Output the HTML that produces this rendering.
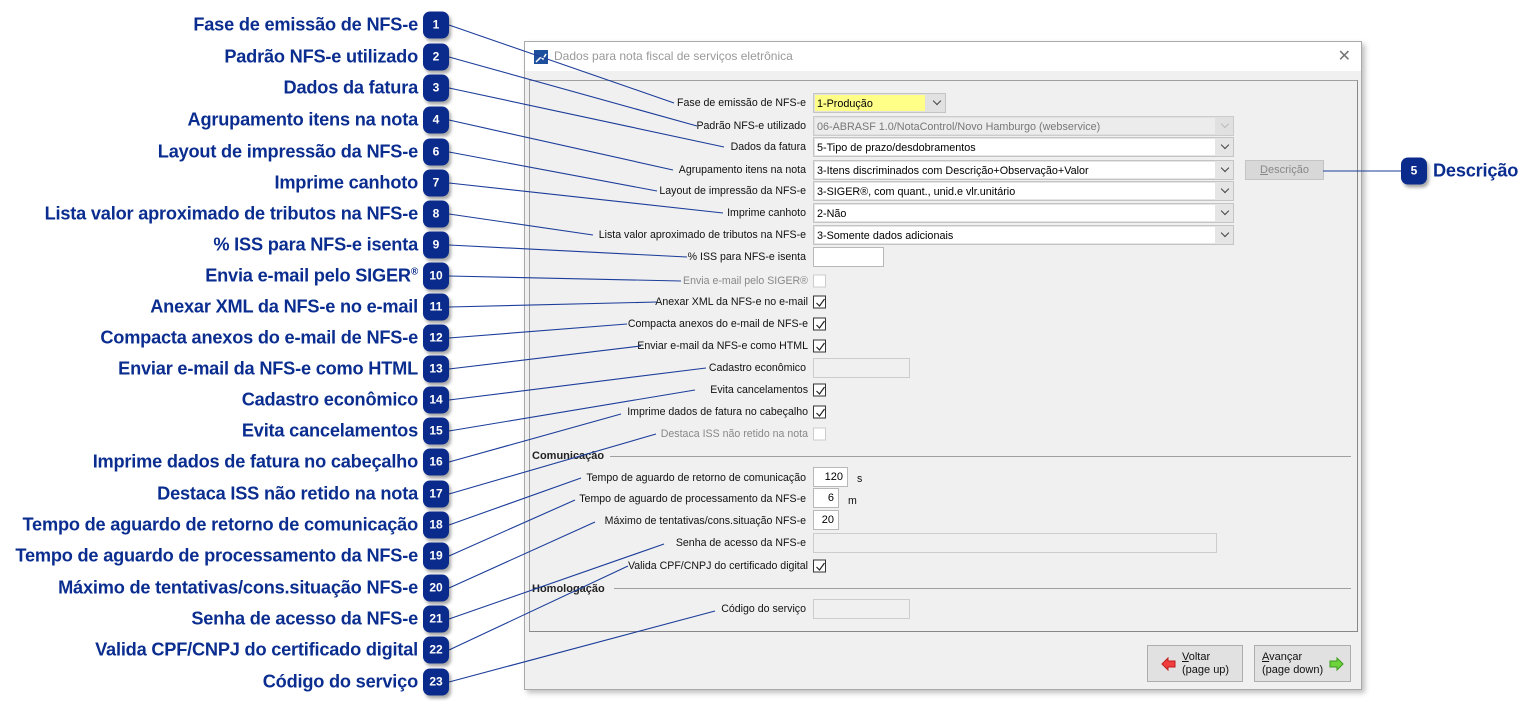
<!DOCTYPE html>
<html><head><meta charset="utf-8"><style>
*{margin:0;padding:0;box-sizing:border-box}
body{width:1532px;height:711px;background:#fff;position:relative;overflow:hidden;font-family:"Liberation Sans",sans-serif}
.cl{position:absolute;right:1114px;font-weight:bold;font-size:18.2px;color:#0a2d8f;white-space:nowrap;transform:translateY(-50%);letter-spacing:-0.2px}
.bd{position:absolute;width:26px;height:27px;border-radius:7px;background:#0b2b8c;color:#fff;font-weight:bold;font-size:12px;text-align:center;line-height:27px;box-shadow:2px 3px 3px rgba(0,0,0,.35);transform:translateY(-50%)}
#dlg{position:absolute;left:524px;top:41px;width:838px;height:649px;background:#f0f0f0;border:1px solid #a9a9a9;box-shadow:3px 3px 5px rgba(0,0,0,.25)}
#tb{position:absolute;left:0;top:0;width:100%;height:29px;background:#fff;font-size:12px;color:#999;line-height:29px;padding-left:29px}
#pn{position:absolute;left:4px;top:38px;width:829px;height:552px;border:1px solid #a0a0a0;border-right-color:#888;border-bottom-color:#888}
.l{position:absolute;right:1532px;font-size:10.6px;color:#111;white-space:nowrap;transform:translateY(-50%)}
.lg{color:#888}
.cb{position:absolute;height:20px;border:1px solid #c4c4c4;background:#e5e5e5;font-size:10.8px;line-height:18px;transform:translateY(-50%)}
.cb span{position:absolute;left:1px;top:1px;bottom:1px;right:18px;background:#fff;padding-left:2px;white-space:nowrap;overflow:hidden}
.cb i{position:absolute;right:5px;top:4px;width:6px;height:6px;border-right:1px solid #444;border-bottom:1px solid #444;transform:rotate(45deg)}
.tx{position:absolute;height:20px;border:1px solid #b8b8b8;background:#fff;font-size:11px;line-height:18px;transform:translateY(-50%);text-align:right;padding-right:4px}
.tx.d{background:#f0f0f0;border-color:#ccc}
.ck{position:absolute;left:813px;width:13px;height:13px;border:1px solid #333;background:#fff;transform:translateY(-50%)}
.ck.d{border-color:#ccc}
.ck svg{position:absolute;left:1px;top:1px}
.sec{position:absolute;left:532px;font-size:11px;font-weight:bold;color:#222;transform:translateY(-50%)}
.hr{position:absolute;left:610px;right:181px;height:1px;background:#a0a0a0}
.btn{position:absolute;top:645px;height:37px;border:1px solid #adadad;background:#e1e1e1;font-size:11px;line-height:13px;color:#111}
</style></head><body>

<div id="dlg">
<div id="tb"><svg style="position:absolute;left:9px;top:8px" width="14" height="14"><rect width="14" height="14" fill="#1d4f9c"/><path d="M2 12 L7 7 L9 9 L12 4" stroke="#fff" stroke-width="1.5" fill="none"/></svg>Dados para nota fiscal de serviços eletrônica<span style="position:absolute;right:10px;top:0;font-size:16px;color:#777">✕</span></div>
<div id="pn"></div>
</div>

<div style="position:absolute;left:0;top:0;width:1532px;height:711px">
<div class="l" style="right:726px;top:103px">Fase de emissão de NFS-e</div>
<div class="cb" style="left:813px;top:103px;width:133px;background:#e1e1e1"><span style="background:#ffff88;right:20px">1-Produção</span><i></i></div>
<div class="l" style="right:726px;top:126px">Padrão NFS-e utilizado</div>
<div class="cb" style="left:813px;top:126px;width:421px;background:#e0e0e0;border-color:#ccc"><span style="background:#ececec;color:#777">06-ABRASF 1.0/NotaControl/Novo Hamburgo (webservice)</span><i style="border-color:#bbb"></i></div>
<div class="l" style="right:726px;top:147px">Dados da fatura</div>
<div class="cb" style="left:813px;top:147px;width:421px"><span>5-Tipo de prazo/desdobramentos</span><i></i></div>
<div class="l" style="right:726px;top:170px">Agrupamento itens na nota</div>
<div class="cb" style="left:813px;top:170px;width:421px"><span>3-Itens discriminados com Descrição+Observação+Valor</span><i></i></div>
<div class="l" style="right:726px;top:191px">Layout de impressão da NFS-e</div>
<div class="cb" style="left:813px;top:191px;width:421px"><span>3-SIGER®, com quant., unid.e vlr.unitário</span><i></i></div>
<div class="l" style="right:726px;top:213px">Imprime canhoto</div>
<div class="cb" style="left:813px;top:213px;width:421px"><span>2-Não</span><i></i></div>
<div class="l" style="right:726px;top:235px">Lista valor aproximado de tributos na NFS-e</div>
<div class="cb" style="left:813px;top:235px;width:421px"><span>3-Somente dados adicionais</span><i></i></div>
<div class="l" style="right:726px;top:257px">% ISS para NFS-e isenta</div>
<div class="tx" style="left:813px;top:257px;width:71px"></div>
<div class="l lg" style="right:724px;top:281px">Envia e-mail pelo SIGER®</div><div class="ck d" style="top:281px"></div>
<div class="l" style="right:724px;top:302px">Anexar XML da NFS-e no e-mail</div><div class="ck" style="top:302px"><svg width="11" height="11"><path d="M1.5 5.5 L4.5 8.5 L9.5 1.5" stroke="#222" stroke-width="1.2" fill="none"/></svg></div>
<div class="l" style="right:724px;top:324px">Compacta anexos do e-mail de NFS-e</div><div class="ck" style="top:324px"><svg width="11" height="11"><path d="M1.5 5.5 L4.5 8.5 L9.5 1.5" stroke="#222" stroke-width="1.2" fill="none"/></svg></div>
<div class="l" style="right:724px;top:346px">Enviar e-mail da NFS-e como HTML</div><div class="ck" style="top:346px"><svg width="11" height="11"><path d="M1.5 5.5 L4.5 8.5 L9.5 1.5" stroke="#222" stroke-width="1.2" fill="none"/></svg></div>
<div class="l" style="right:726px;top:368px">Cadastro econômico</div>
<div class="tx d" style="left:813px;top:368px;width:97px"></div>
<div class="l" style="right:724px;top:390px">Evita cancelamentos</div><div class="ck" style="top:390px"><svg width="11" height="11"><path d="M1.5 5.5 L4.5 8.5 L9.5 1.5" stroke="#222" stroke-width="1.2" fill="none"/></svg></div>
<div class="l" style="right:724px;top:412px">Imprime dados de fatura no cabeçalho</div><div class="ck" style="top:412px"><svg width="11" height="11"><path d="M1.5 5.5 L4.5 8.5 L9.5 1.5" stroke="#222" stroke-width="1.2" fill="none"/></svg></div>
<div class="l lg" style="right:724px;top:434px">Destaca ISS não retido na nota</div><div class="ck d" style="top:434px"></div>
<div class="sec" style="top:456px">Comunicação</div><div class="hr" style="top:456px"></div>
<div class="l" style="right:726px;top:478px">Tempo de aguardo de retorno de comunicação</div>
<div class="tx" style="left:813px;top:477px;width:35px">120</div><div class="l" style="left:857px;right:auto;top:479px">s</div>
<div class="l" style="right:726px;top:499px">Tempo de aguardo de processamento da NFS-e</div>
<div class="tx" style="left:813px;top:498px;width:26px">6</div><div class="l" style="left:848px;right:auto;top:501px">m</div>
<div class="l" style="right:726px;top:521px">Máximo de tentativas/cons.situação NFS-e</div>
<div class="tx" style="left:813px;top:520px;width:26px">20</div>
<div class="l" style="right:726px;top:543px">Senha de acesso da NFS-e</div>
<div class="tx d" style="left:813px;top:543px;width:404px"></div>
<div class="l" style="right:724px;top:566px">Valida CPF/CNPJ do certificado digital</div><div class="ck" style="top:566px"><svg width="11" height="11"><path d="M1.5 5.5 L4.5 8.5 L9.5 1.5" stroke="#222" stroke-width="1.2" fill="none"/></svg></div>
<div class="sec" style="top:589px">Homologação</div><div class="hr" style="top:588px;left:614px"></div>
<div class="l" style="right:726px;top:609px">Código do serviço</div>
<div class="tx d" style="left:813px;top:609px;width:97px"></div>

<div style="position:absolute;left:1245px;top:160px;width:79px;height:20px;border:1px solid #c4c4c4;background:#d8d8d8;color:#888;font-size:11px;text-align:center;line-height:18px"><u>D</u>escrição</div>

<div class="btn" style="left:1147px;width:96px"><svg style="position:absolute;left:13px;top:11px" width="16" height="14"><path d="M1 7 L7 1 L7 4 L14 4 L14 10 L7 10 L7 13 Z" fill="#f03c3c" stroke="#c01c1c"/></svg><div style="position:absolute;left:34px;top:5px"><u>V</u>oltar<br>(page up)</div></div>
<div class="btn" style="left:1254px;width:97px"><div style="position:absolute;left:7px;top:5px"><u>A</u>vançar<br>(page down)</div><svg style="position:absolute;left:73px;top:11px" width="16" height="14"><path d="M15 7 L9 1 L9 4 L2 4 L2 10 L9 10 L9 13 Z" fill="#6ed33c" stroke="#3a9a1c"/></svg></div>
</div>

<svg width="1532" height="711" style="position:absolute;left:0;top:0" stroke="#1c3d9a" stroke-width="1.1" fill="none">
<line x1="449" y1="25" x2="674" y2="103"/>
<line x1="449" y1="57" x2="697" y2="126"/>
<line x1="449" y1="88" x2="724" y2="147"/>
<line x1="449" y1="120" x2="673" y2="170"/>
<line x1="449" y1="152" x2="657" y2="191"/>
<line x1="449" y1="183" x2="723" y2="213"/>
<line x1="449" y1="214" x2="593" y2="235"/>
<line x1="449" y1="245" x2="687" y2="257"/>
<line x1="449" y1="276" x2="681" y2="281"/>
<line x1="449" y1="307" x2="657" y2="302"/>
<line x1="449" y1="338" x2="627" y2="324"/>
<line x1="449" y1="369" x2="641" y2="346"/>
<line x1="449" y1="400" x2="706" y2="368"/>
<line x1="449" y1="431" x2="695" y2="390"/>
<line x1="449" y1="462" x2="621" y2="414"/>
<line x1="449" y1="494" x2="656" y2="434"/>
<line x1="449" y1="525" x2="581" y2="478"/>
<line x1="449" y1="556" x2="575" y2="500"/>
<line x1="449" y1="588" x2="595" y2="522"/>
<line x1="449" y1="619" x2="664" y2="544"/>
<line x1="449" y1="650" x2="628" y2="566"/>
<line x1="449" y1="682" x2="715" y2="611"/>
<line x1="1323" y1="171" x2="1402" y2="171"/>
</svg>

<div class="cl" style="top:25px">Fase de emissão de NFS-e</div><div class="bd" style="left:423px;top:25px">1</div>
<div class="cl" style="top:57px">Padrão NFS-e utilizado</div><div class="bd" style="left:423px;top:57px">2</div>
<div class="cl" style="top:88px">Dados da fatura</div><div class="bd" style="left:423px;top:88px">3</div>
<div class="cl" style="top:120px">Agrupamento itens na nota</div><div class="bd" style="left:423px;top:120px">4</div>
<div class="cl" style="top:152px">Layout de impressão da NFS-e</div><div class="bd" style="left:423px;top:152px">6</div>
<div class="cl" style="top:183px">Imprime canhoto</div><div class="bd" style="left:423px;top:183px">7</div>
<div class="cl" style="top:214px">Lista valor aproximado de tributos na NFS-e</div><div class="bd" style="left:423px;top:214px">8</div>
<div class="cl" style="top:245px">% ISS para NFS-e isenta</div><div class="bd" style="left:423px;top:245px">9</div>
<div class="cl" style="top:276px">Envia e-mail pelo SIGER<sup style="font-size:10px">®</sup></div><div class="bd" style="left:423px;top:276px">10</div>
<div class="cl" style="top:307px">Anexar XML da NFS-e no e-mail</div><div class="bd" style="left:423px;top:307px">11</div>
<div class="cl" style="top:338px">Compacta anexos do e-mail de NFS-e</div><div class="bd" style="left:423px;top:338px">12</div>
<div class="cl" style="top:369px">Enviar e-mail da NFS-e como HTML</div><div class="bd" style="left:423px;top:369px">13</div>
<div class="cl" style="top:400px">Cadastro econômico</div><div class="bd" style="left:423px;top:400px">14</div>
<div class="cl" style="top:431px">Evita cancelamentos</div><div class="bd" style="left:423px;top:431px">15</div>
<div class="cl" style="top:462px">Imprime dados de fatura no cabeçalho</div><div class="bd" style="left:423px;top:462px">16</div>
<div class="cl" style="top:494px">Destaca ISS não retido na nota</div><div class="bd" style="left:423px;top:494px">17</div>
<div class="cl" style="top:525px">Tempo de aguardo de retorno de comunicação</div><div class="bd" style="left:423px;top:525px">18</div>
<div class="cl" style="top:556px">Tempo de aguardo de processamento da NFS-e</div><div class="bd" style="left:423px;top:556px">19</div>
<div class="cl" style="top:588px">Máximo de tentativas/cons.situação NFS-e</div><div class="bd" style="left:423px;top:588px">20</div>
<div class="cl" style="top:619px">Senha de acesso da NFS-e</div><div class="bd" style="left:423px;top:619px">21</div>
<div class="cl" style="top:650px">Valida CPF/CNPJ do certificado digital</div><div class="bd" style="left:423px;top:650px">22</div>
<div class="cl" style="top:682px">Código do serviço</div><div class="bd" style="left:423px;top:682px">23</div>

<div class="bd" style="left:1401px;top:171px">5</div>
<div class="cl" style="left:1433px;right:auto;top:171px">Descrição</div>
</body></html>
